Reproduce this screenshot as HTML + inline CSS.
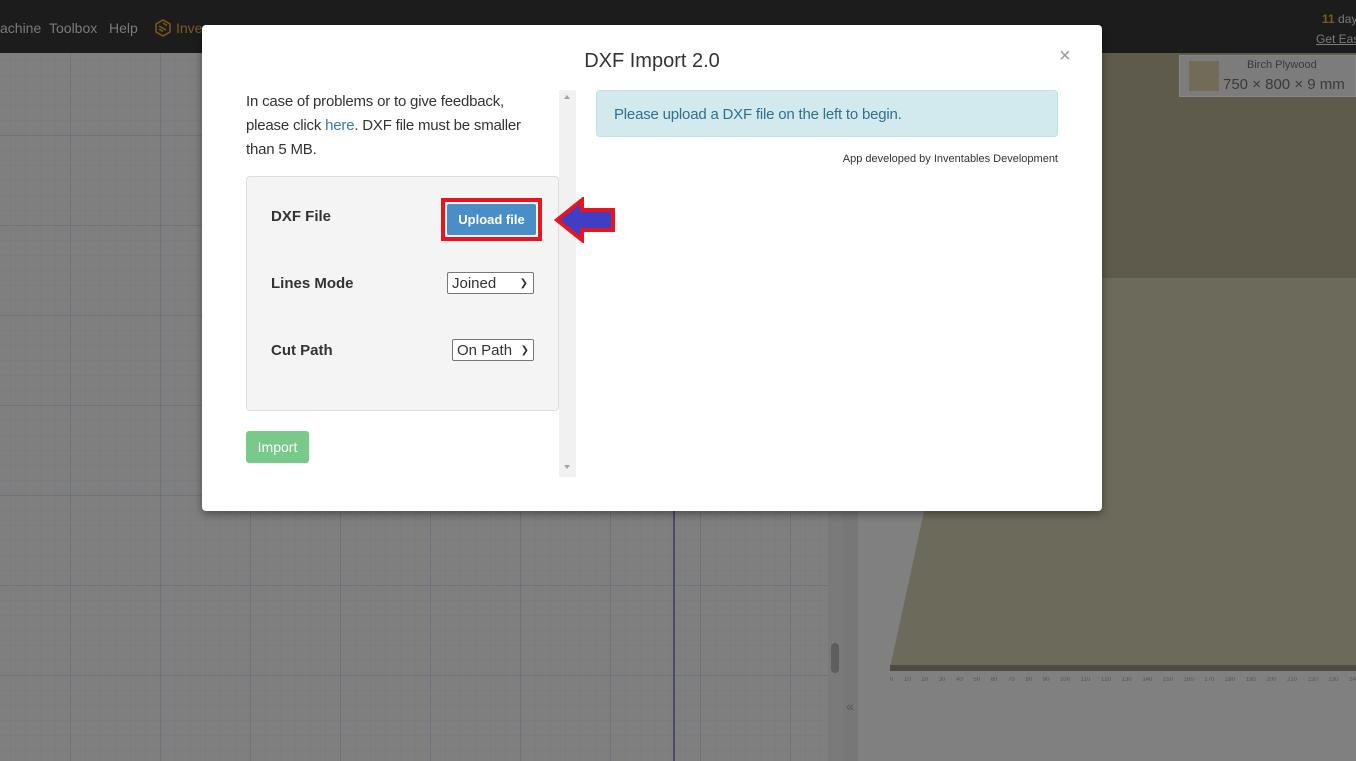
<!DOCTYPE html>
<html><head><style>
*{box-sizing:border-box;margin:0;padding:0}
body{width:1356px;height:761px;overflow:hidden;position:relative;font-family:"Liberation Sans",sans-serif;background:#808080}
.hdr{position:absolute;left:0;top:0;width:1356px;height:53px;background:#1c1c1c;color:#7a7a7a;font-size:14px;overflow:hidden;white-space:nowrap}
.grid{position:absolute;left:0;top:53px;width:828px;height:708px;background-color:#7f7f7f;
background-image:linear-gradient(90deg,rgba(90,105,125,.45) 1px,transparent 1px),linear-gradient(rgba(90,105,125,.45) 1px,transparent 1px),linear-gradient(90deg,rgba(100,110,125,.18) 1px,transparent 1px),linear-gradient(rgba(100,110,125,.18) 1px,transparent 1px);
background-size:90px 90px,90px 90px,15px 15px,15px 15px;background-position:-20px 0,0 -8px,-5px 0,0 -8px}
</style></head><body>
<div class="hdr">
<span style="position:absolute;left:0;top:20px">achine</span>
<span style="position:absolute;left:49px;top:20px">Toolbox</span>
<span style="position:absolute;left:109px;top:20px">Help</span>
<svg style="position:absolute;left:155px;top:19px" width="16" height="18" viewBox="0 0 16 18"><path d="M8 1L15 5V13L8 17L1 13V5Z M4 7L11 11 M4 10L8 12.5 M8 4L12 6.5" fill="none" stroke="#7d5a1c" stroke-width="1.5"/></svg>
<span style="position:absolute;left:176px;top:20px;color:#7d5a1c">Inve</span>
<span style="position:absolute;left:1322px;top:12px;font-size:12px"><b style="color:#7d5a1c">11</b> day</span>
<span style="position:absolute;left:1316px;top:32px;font-size:12px;text-decoration:underline">Get Eas</span>
</div>
<div class="grid"></div>
<div style="position:absolute;left:673px;top:53px;width:2px;height:708px;background:#4a4a6a"></div>
<div style="position:absolute;left:828px;top:53px;width:15px;height:708px;background:#7a7a7a"></div>
<div style="position:absolute;left:831px;top:643px;width:8px;height:30px;border-radius:4px;background:#5e5e5e"></div>
<div style="position:absolute;left:843px;top:53px;width:15px;height:708px;background:#777"></div>
<div style="position:absolute;left:846px;top:698px;color:#555;font-size:14px">«</div>
<div style="position:absolute;left:858px;top:53px;width:498px;height:708px;background:#808080"></div>
<div style="position:absolute;left:858px;top:53px;width:498px;height:615px;background:#6c6a5a;clip-path:polygon(60px 0,498px 0,498px 615px,32px 615px,70px 440px)"></div>
<div style="position:absolute;left:900px;top:53px;width:456px;height:225px;background:#5f5b4c"></div>
<div style="position:absolute;left:890px;top:665px;width:466px;height:6px;background:#4e4c42"></div>
<div style="position:absolute;left:890px;top:677px;width:466px;font-size:6px;color:#555;word-spacing:9px;white-space:nowrap;overflow:hidden">0 10 20 30 40 50 60 70 80 90 100 110 120 130 140 150 160 170 180 190 200 210 220 230 240 250</div>
<div style="position:absolute;left:1179px;top:55px;width:177px;height:42px;background:#7c7c7c;border:1px solid #888"></div>
<div style="position:absolute;left:1189px;top:61px;width:30px;height:30px;background:#716b58"></div>
<div style="position:absolute;left:1247px;top:59px;font-size:11px;color:#3a3a3a">Birch Plywood</div>
<div style="position:absolute;left:1223px;top:76px;font-size:15px;color:#3a3a3a;white-space:nowrap">750 × 800 × 9 mm</div>

<div style="position:absolute;left:202px;top:25px;width:900px;height:486px;background:#fff;border-radius:4px;box-shadow:0 3px 9px rgba(0,0,0,.4)">
<div style="position:absolute;left:0;width:900px;top:25px;text-align:center;font-size:20px;color:#333">DXF Import 2.0</div>
<div style="position:absolute;left:857px;top:20px;font-size:20px;color:#999">×</div>
<div style="position:absolute;left:44px;top:65px;width:300px;font-size:15px;line-height:24px;color:#333;letter-spacing:-0.2px">In case of problems or to give feedback, please click <span style="color:#337ab7">here</span>. DXF file must be smaller than 5 MB.</div>
<div style="position:absolute;left:357px;top:65px;width:17px;height:387px;background:#f1f1f1"><div style="position:absolute;left:5px;top:5px;border:3.5px solid transparent;border-bottom:4px solid #a3a3a3;border-top:0"></div><div style="position:absolute;left:5px;top:375px;border:3.5px solid transparent;border-top:4px solid #a3a3a3;border-bottom:0"></div></div>
<div style="position:absolute;left:44px;top:151px;width:313px;height:235px;background:#f4f4f4;border:1px solid #ddd;border-radius:4px;font-size:15px;font-weight:bold;color:#333">
<div style="position:absolute;left:24px;top:31px">DXF File</div>
<div style="position:absolute;left:24px;top:98px">Lines Mode</div>
<div style="position:absolute;left:24px;top:165px">Cut Path</div>
<div style="position:absolute;left:194px;top:21px;width:101px;height:43px;border:4px solid #e8141e"><div style="position:absolute;left:2px;top:2px;width:89px;height:31px;background:#4a8ec8;border-radius:2px;color:#fff;font-size:13px;text-align:center;line-height:31px">Upload file</div></div>
<div style="position:absolute;left:200px;top:95px;width:87px;height:22px;background:#fff;border:1px solid #777;border-radius:2px;font-weight:normal;font-size:15px;padding-left:4px;line-height:22px">Joined<span style="position:absolute;right:5px;top:0;font-size:10px">❯</span></div>
<div style="position:absolute;left:205px;top:162px;width:82px;height:22px;background:#fff;border:1px solid #777;border-radius:2px;font-weight:normal;font-size:15px;padding-left:4px;line-height:22px">On Path<span style="position:absolute;right:4px;top:0;font-size:10px">❯</span></div>
</div>
<svg style="position:absolute;left:352px;top:172px" width="62" height="46" viewBox="0 0 62 46"><path d="M3 23L28 3V13H59V33H28V43Z" fill="#3f3fc4" stroke="#e8141e" stroke-width="4" stroke-linejoin="miter"/></svg>
<div style="position:absolute;left:44px;top:406px;width:63px;height:32px;background:#78c98a;border-radius:3px;color:#fff;font-size:14px;text-align:center;line-height:32px">Import</div>
<div style="position:absolute;left:394px;top:65px;width:462px;height:47px;background:#d2e9ee;border:1px solid #bce1e8;border-radius:4px;color:#31708f;font-size:15px;padding:15px 17px;letter-spacing:-0.2px">Please upload a DXF file on the left to begin.</div>
<div style="position:absolute;right:44px;top:128px;font-size:11px;color:#333">App developed by Inventables Development</div>
</div>
</body></html>
